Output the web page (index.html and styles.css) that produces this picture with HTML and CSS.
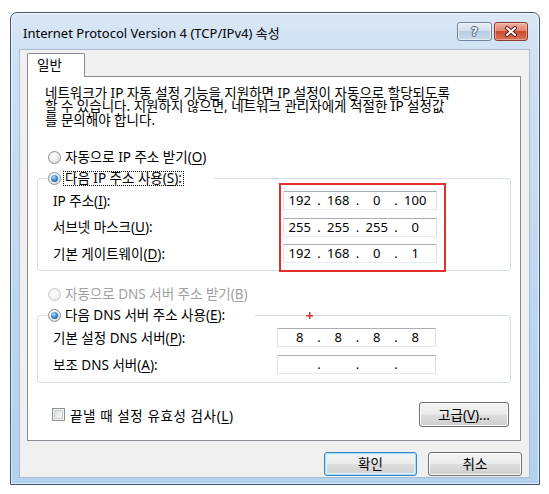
FILE: index.html
```html
<!DOCTYPE html>
<html lang="ko">
<head>
<meta charset="utf-8">
<title>Internet Protocol Version 4 (TCP/IPv4) 속성</title>
<link rel="stylesheet" href="styles.css">
</head>
<body>
<div class="window">
  <div class="titlebar">
    <span class="title">Internet Protocol Version 4 (TCP/IPv4) 속성</span>
    <div class="tbtns">
      <div class="tb help"><span class="qmark">?</span></div>
      <div class="tb close">
        <svg width="14" height="11" viewBox="0 0 14 11"><path d="M3 2 L11 9 M11 2 L3 9" stroke="#5b1e14" stroke-width="4" stroke-linecap="round" fill="none"/><path d="M3 2 L11 9 M11 2 L3 9" stroke="#ffffff" stroke-width="2" stroke-linecap="round" fill="none"/></svg>
      </div>
    </div>
  </div>
  <div class="client">
    <div class="tabs"><div class="tab">일반</div></div>
    <div class="panel">
      <p class="intro">네트워크가 IP 자동 설정 기능을 지원하면 IP 설정이 자동으로 할당되도록<br>할 수 있습니다. 지원하지 않으면, 네트워크 관리자에게 적절한 IP 설정값<br>를 문의해야 합니다.</p>

      <div class="radio-row"><span class="radio"></span><span>자동으로 IP 주소 받기(<u>O</u>)</span></div>

      <fieldset class="group">
        <legend class="legend"><span class="radio on"></span><span class="focus">다음 IP 주소 사용(<u>S</u>):</span></legend>
        <div class="rows">
          <div class="row"><span class="label l1">IP 주소(<u>I</u>):</span>
            <div class="ip"><span class="oct">192</span><span class="dot">.</span><span class="oct">168</span><span class="dot">.</span><span class="oct">0</span><span class="dot">.</span><span class="oct">100</span></div></div>
          <div class="row"><span class="label l1">서브넷 마스크(<u>U</u>):</span>
            <div class="ip"><span class="oct">255</span><span class="dot">.</span><span class="oct">255</span><span class="dot">.</span><span class="oct">255</span><span class="dot">.</span><span class="oct">0</span></div></div>
          <div class="row"><span class="label l1">기본 게이트웨이(<u>D</u>):</span>
            <div class="ip"><span class="oct">192</span><span class="dot">.</span><span class="oct">168</span><span class="dot">.</span><span class="oct">0</span><span class="dot">.</span><span class="oct">1</span></div></div>
        </div>
      </fieldset>

      <div class="radio-row r3 disabled"><span class="radio off"></span><span>자동으로 DNS 서버 주소 받기(<u>B</u>)</span></div>

      <fieldset class="group g2">
        <legend class="legend"><span class="radio on"></span><span>다음 DNS 서버 주소 사용(<u>E</u>):</span></legend>
        <div class="rows r2">
          <div class="row"><span class="label l2">기본 설정 DNS 서버(<u>P</u>):</span>
            <div class="ip dns"><span class="oct">8</span><span class="dot">.</span><span class="oct">8</span><span class="dot">.</span><span class="oct">8</span><span class="dot">.</span><span class="oct">8</span></div></div>
          <div class="row"><span class="label l2">보조 DNS 서버(<u>A</u>):</span>
            <div class="ip dns"><span class="oct"></span><span class="dot">.</span><span class="oct"></span><span class="dot">.</span><span class="oct"></span><span class="dot">.</span><span class="oct"></span></div></div>
        </div>
      </fieldset>

      <div class="check-row">
        <span class="checkbox"></span><span class="check-label">끝낼 때 설정 유효성 검사(<u>L</u>)</span>
        <button class="btn adv">고급(<u>V</u>)...</button>
      </div>
    </div>
    <div class="actions">
      <button class="btn default ok">확인</button>
      <button class="btn cancel">취소</button>
    </div>
  </div>
</div>
<div class="annot-box"></div>
<div class="annot-plus"></div>
</body>
</html>
```

FILE: styles.css
```css
* { box-sizing: border-box; }
html, body { margin: 0; padding: 0; background: #ffffff; }
body {
  width: 549px;
  height: 494px;
  overflow: hidden;
  font-family: "Noto Sans", "Noto Sans CJK KR", sans-serif;
  font-size: 13.5px;
  color: #000;
}
u { text-decoration-thickness: 1px; text-underline-offset: 2px; }

.window {
  margin: 12px 0 0 10px;
  width: 530px;
  height: 473px;
  border: 1px solid #3e5673;
  border-radius: 7px 7px 0 0;
  background: linear-gradient(180deg, #dbe8f5 0%, #cfe1f3 8%, #bed7f0 60%, #b3d0ed 100%);
  box-shadow: inset 0 0 0 1px rgba(255,255,255,0.55);
  padding: 0 9px 6px 8px;
  display: flex;
  flex-direction: column;
}

.titlebar {
  height: 36px;
  flex: none;
  display: flex;
  justify-content: space-between;
  align-items: flex-start;
}
.title {
  font-size: 13px;
  line-height: 17px;
  margin: 12px 0 0 4px;
  color: #000;
}
.tbtns { display: flex; gap: 2px; margin: 9px 2px 0 0; }
.tb {
  height: 19px;
  border-radius: 3px;
  display: flex;
  align-items: center;
  justify-content: center;
}
.help {
  width: 35px;
  border: 1px solid #6d84a2;
  background: linear-gradient(180deg, #e6eef7 0%, #d3dfec 45%, #b9cce2 50%, #c8d8ea 100%);
  box-shadow: inset 0 0 0 1px rgba(255,255,255,0.55);
}
.qmark {
  font-family: "DejaVu Sans", sans-serif;
  font-weight: bold;
  font-size: 12px;
  line-height: 14px;
  color: #eef2f7;
  text-shadow: 1px 0 0 #4d5e76, -1px 0 0 #4d5e76, 0 1px 0 #4d5e76, 0 -1px 0 #4d5e76;
}
.close {
  width: 34px;
  border: 1px solid #8c392c;
  background: linear-gradient(180deg, #eeb1a2 0%, #df8672 45%, #cb4b31 50%, #d7735a 100%);
  box-shadow: inset 0 0 0 1px rgba(255,220,210,0.45);
}
.close svg { display: block; }

.client {
  flex: 1;
  background: #f0f0f0;
  border: 1px solid #a9bdd3;
  padding: 3px 8px 0 7px;
  display: flex;
  flex-direction: column;
}

.tabs { display: flex; height: 23px; flex: none; }
.tab {
  position: relative;
  z-index: 1;
  width: 58px;
  height: 24px;
  background: #ffffff;
  border: 1px solid #898c95;
  border-bottom: none;
  border-radius: 2px 2px 0 0;
  padding-left: 9px;
  line-height: 22px;
}

.panel {
  height: 365px;
  flex: none;
  background: #ffffff;
  border: 1px solid #898c95;
  display: flex;
  flex-direction: column;
}

.intro {
  margin: 10px 0 0 17px;
  line-height: 13.4px;
}

.radio-row {
  display: flex;
  align-items: center;
  gap: 4px;
  height: 18px;
  line-height: 18px;
  margin: 21px 0 0 20px;
}
.radio-row.r3 { margin-top: 14px; }
.disabled { color: #a0a0a0; }

.radio {
  width: 13px;
  height: 13px;
  flex: none;
  border-radius: 50%;
  border: 1px solid #8e8f8f;
  background: radial-gradient(circle at 40% 35%, #ffffff 0%, #eaeaea 55%, #d2d2d2 100%);
  display: inline-flex;
  align-items: center;
  justify-content: center;
}
.radio.on::after {
  content: "";
  width: 7px;
  height: 7px;
  border-radius: 50%;
  background: radial-gradient(circle at 40% 35%, #b4e2ff 0%, #3d8ad0 45%, #0d4a86 100%);
}
.radio.off {
  border-color: #c9c9c9;
  background: radial-gradient(circle at 40% 35%, #ffffff 0%, #f2f2f2 60%, #e4e4e4 100%);
}

.group {
  margin: 3px 9px 0 9px;
  padding: 4px 0 7px 15px;
  border: 1px solid #d5dfe5;
  border-radius: 3px;
  min-width: 0;
}
.group.g2 { padding-bottom: 8px; }
.legend {
  margin-left: -6px;
  padding: 0 30px 0 1px;
  height: 18px;
  line-height: 18px;
  display: flex;
  align-items: center;
  gap: 4px;
}
.focus {
  display: inline-block;
  line-height: 13px;
  border: 1px dotted #000;
  padding: 0 1px;
  margin-left: -2px;
}

.rows { display: flex; flex-direction: column; gap: 7.5px; }
.rows.r2 { gap: 8px; }
.row { display: flex; align-items: center; height: 19px; }
.label { flex: none; line-height: 18px; }
.l1 { width: 230px; }
.l2 { width: 224px; }

.ip {
  display: flex;
  width: 154px;
  height: 19px;
  background: #ffffff;
  border: 1px solid;
  border-color: #abadb3 #dbdfe6 #e3e9ef #e2e3ea;
  font-size: 13px;
  line-height: 17px;
}
.ip.dns { width: 159px; padding-left: 6px; }
.oct { width: 31.5px; flex: none; text-align: center; }
.dot { width: 7px; flex: none; text-align: center; }

.check-row {
  display: flex;
  align-items: center;
  margin: 19px 11px 0 24px;
  height: 25px;
}
.check-label { letter-spacing: 0.6px; }
.checkbox {
  width: 13px;
  height: 13px;
  flex: none;
  margin-right: 5px;
  border: 1px solid #8e8f8f;
  background: linear-gradient(135deg, #d9dcdf 0%, #eef0f2 60%, #fbfbfb 100%);
  box-shadow: inset 0 0 0 1px #f4f4f4, inset 0 0 0 2px #c8ccd0;
}

.btn {
  font-family: "Noto Sans", "Noto Sans CJK KR", sans-serif;
  font-size: 13.5px;
  color: #000;
  padding: 0;
  border: 1px solid #707070;
  border-radius: 3px;
  background: linear-gradient(180deg, #f3f3f3 0%, #ebebeb 48%, #dddddd 52%, #cfcfcf 100%);
  box-shadow: inset 0 0 0 1px #fbfbfb;
  line-height: 20px;
}
.adv { margin-left: auto; width: 90px; height: 25px; }

.actions {
  display: flex;
  justify-content: flex-end;
  gap: 11px;
  margin: 11px -1px 0 0;
}
.ok { width: 93px; height: 24px; }
.cancel { width: 94px; height: 24px; }
.btn.default {
  border-color: #3a86c5;
  box-shadow: inset 0 0 0 1px #a9dcf6, inset 0 0 0 2px #e2f2fb;
}

.annot-box {
  position: absolute;
  left: 279px;
  top: 183px;
  width: 167px;
  height: 89px;
  border: 2px solid #e4302b;
}
.annot-plus {
  position: absolute;
  left: 306px;
  top: 312px;
  width: 7px;
  height: 7px;
  background:
    linear-gradient(#e4302b, #e4302b) center / 7px 1.5px no-repeat,
    linear-gradient(#e4302b, #e4302b) center / 1.5px 7px no-repeat;
}
```
